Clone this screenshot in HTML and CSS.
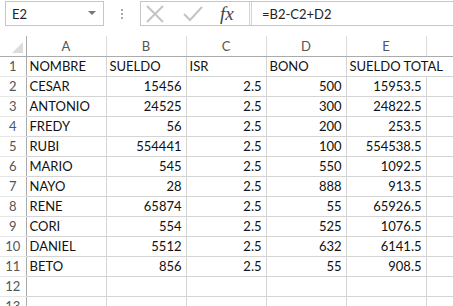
FILE: index.html
```html
<!DOCTYPE html>
<html lang="es">
<head>
    <meta charset="UTF-8">
    <title>Nomina</title>
    <link rel="stylesheet" href="styles.css">
</head>
<body>

<div class="toolbar">
    <div class="name-box">
        <span>E2</span>
        <svg class="arrow" width="8" height="5" viewBox="0 0 8 5"><path d="M0 0 L8 0 L4 4 Z" fill="#777"/></svg>
    </div>
    <div class="dots"><i></i><i></i><i></i></div>
    <div class="formula-bar">
        <div class="buttons">
            <svg width="20" height="18" viewBox="0 0 20 18"><path d="M2 1 L18 17 M18 1 L2 17" stroke="#c4c4c4" stroke-width="2" fill="none"/></svg>
            <svg width="20" height="18" viewBox="0 0 20 18"><path d="M1 9 L7 15 L19 2" stroke="#c4c4c4" stroke-width="2" fill="none"/></svg>
            <span class="fx">fx</span>
        </div>
        <div class="formula">=B2-C2+D2</div>
    </div>
</div>

<table class="sheet">
    <colgroup>
        <col class="c-head"><col class="c-cell"><col class="c-cell"><col class="c-cell"><col class="c-cell"><col class="c-cell"><col class="c-extra">
    </colgroup>
    <tr class="col-heads">
        <th class="corner"><span class="tri"></span></th>
        <th>A</th><th>B</th><th>C</th><th>D</th><th>E</th><th></th>
    </tr>
    <tr><th>1</th><td>NOMBRE</td><td>SUELDO</td><td>ISR</td><td>BONO</td><td class="spill">SUELDO TOTAL</td><td></td></tr>
    <tr><th>2</th><td>CESAR</td><td class="num">15456</td><td class="num">2.5</td><td class="num">500</td><td class="num">15953.5</td><td></td></tr>
    <tr><th>3</th><td>ANTONIO</td><td class="num">24525</td><td class="num">2.5</td><td class="num">300</td><td class="num">24822.5</td><td></td></tr>
    <tr><th>4</th><td>FREDY</td><td class="num">56</td><td class="num">2.5</td><td class="num">200</td><td class="num">253.5</td><td></td></tr>
    <tr><th>5</th><td>RUBI</td><td class="num">554441</td><td class="num">2.5</td><td class="num">100</td><td class="num">554538.5</td><td></td></tr>
    <tr><th>6</th><td>MARIO</td><td class="num">545</td><td class="num">2.5</td><td class="num">550</td><td class="num">1092.5</td><td></td></tr>
    <tr><th>7</th><td>NAYO</td><td class="num">28</td><td class="num">2.5</td><td class="num">888</td><td class="num">913.5</td><td></td></tr>
    <tr><th>8</th><td>RENE</td><td class="num">65874</td><td class="num">2.5</td><td class="num">55</td><td class="num">65926.5</td><td></td></tr>
    <tr><th>9</th><td>CORI</td><td class="num">554</td><td class="num">2.5</td><td class="num">525</td><td class="num">1076.5</td><td></td></tr>
    <tr><th>10</th><td>DANIEL</td><td class="num">5512</td><td class="num">2.5</td><td class="num">632</td><td class="num">6141.5</td><td></td></tr>
    <tr><th>11</th><td>BETO</td><td class="num">856</td><td class="num">2.5</td><td class="num">55</td><td class="num">908.5</td><td></td></tr>
    <tr><th>12</th><td></td><td></td><td></td><td></td><td></td><td></td></tr>
    <tr><th>13</th><td></td><td></td><td></td><td></td><td></td><td></td></tr>
</table>

</body>
</html>
```

FILE: styles.css
```css
body {
    margin: 0;
    background-color: #fff;
    font-family: Lato, "Liberation Sans", sans-serif;
    font-size: 13px;
    color: #111;
    overflow: hidden;
}
.toolbar {
    display: flex;
    align-items: stretch;
    height: 25px;
    padding-top: 1px;
}
.name-box {
    display: flex;
    align-items: center;
    justify-content: space-between;
    margin-left: 5px;
    width: 99px;
    padding: 0 6px;
    box-sizing: border-box;
    border: 1px solid #c6c6c6;
    color: #222;
}
.name-box .arrow {
    margin-right: 1px;
}
.dots {
    display: flex;
    flex-direction: column;
    justify-content: center;
    gap: 2px;
    width: 36px;
    align-items: center;
}
.dots i {
    display: block;
    width: 2px;
    height: 2px;
    background-color: #a8a8a8;
}
.formula-bar {
    flex-grow: 1;
    display: flex;
    border-top: 1px solid #c6c6c6;
    border-bottom: 1px solid #c6c6c6;
    border-left: 1px solid #c6c6c6;
}
.buttons {
    display: flex;
    align-items: center;
    gap: 18px;
    padding-left: 4px;
    width: 111px;
    box-sizing: border-box;
    border-right: 3px double #d4d4d4;
}
.fx {
    font-family: "Liberation Serif", serif;
    font-style: italic;
    font-size: 19px;
    color: #444;
    margin-left: -1px;
}
.formula {
    display: flex;
    align-items: center;
    padding-left: 10px;
    color: #222;
}
.sheet {
    margin-top: 10px;
    border-collapse: collapse;
    table-layout: fixed;
    width: 460px;
}
.c-head {
    width: 26px;
}
.c-cell {
    width: 80px;
}
.c-extra {
    width: 34px;
}
.sheet th, .sheet td {
    height: 20px;
    padding: 0 3px;
    box-sizing: border-box;
    white-space: nowrap;
    overflow: hidden;
}
.sheet td {
    border-right: 1px solid #d4d4d4;
    border-bottom: 1px solid #d4d4d4;
}
.sheet td.num {
    text-align: right;
    padding-right: 4px;
}
.sheet td.spill {
    overflow: visible;
    border-right: none;
}
.sheet th {
    font-weight: normal;
    color: #555;
    text-align: center;
    padding: 0;
    border-right: 1px solid #ababab;
    border-bottom: 1px solid #e6e6e6;
}
.col-heads th {
    border-right: 1px solid #dcdcdc;
    border-bottom: 1px solid #ababab;
}
.col-heads th.corner {
    position: relative;
    border-right: 1px solid #ababab;
}
.tri {
    position: absolute;
    right: 3px;
    bottom: 3px;
    width: 0;
    height: 0;
    border-left: 11px solid transparent;
    border-bottom: 11px solid #dcdcdc;
}
```
